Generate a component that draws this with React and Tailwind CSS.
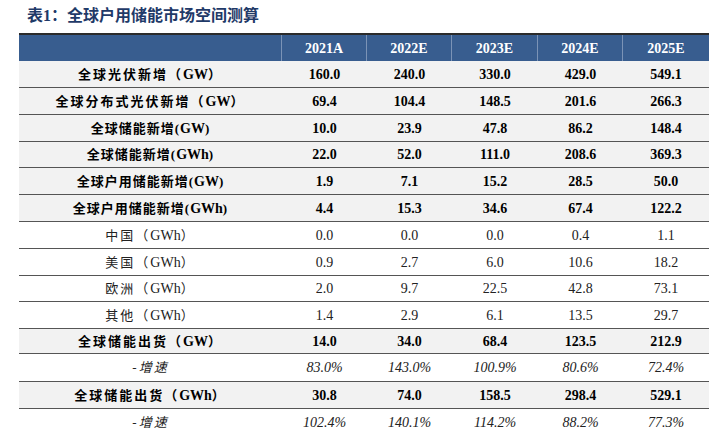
import React from "react";

const serif = { fontFamily: '"Liberation Serif", "Noto Sans CJK SC", serif' };

const years = ["2021A", "2022E", "2023E", "2024E", "2025E"];

const rows = [
  { label: "全球光伏新增（GW）", vals: ["160.0", "240.0", "330.0", "429.0", "549.1"], kind: "bold", h: 27 },
  { label: "全球分布式光伏新增（GW）", vals: ["69.4", "104.4", "148.5", "201.6", "266.3"], kind: "bold", h: 27 },
  { label: "全球储能新增(GW)", vals: ["10.0", "23.9", "47.8", "86.2", "148.4"], kind: "bold", h: 27, tight: true },
  { label: "全球储能新增(GWh)", vals: ["22.0", "52.0", "111.0", "208.6", "369.3"], kind: "bold", h: 26, tight: true },
  { label: "全球户用储能新增(GW)", vals: ["1.9", "7.1", "15.2", "28.5", "50.0"], kind: "bold", h: 27, tight: true },
  { label: "全球户用储能新增(GWh)", vals: ["4.4", "15.3", "34.6", "67.4", "122.2"], kind: "bold", h: 27, tight: true },
  { label: "中国（GWh）", vals: ["0.0", "0.0", "0.0", "0.4", "1.1"], kind: "plain", h: 27 },
  { label: "美国（GWh）", vals: ["0.9", "2.7", "6.0", "10.6", "18.2"], kind: "plain", h: 27 },
  { label: "欧洲（GWh）", vals: ["2.0", "9.7", "22.5", "42.8", "73.1"], kind: "plain", h: 26 },
  { label: "其他（GWh）", vals: ["1.4", "2.9", "6.1", "13.5", "29.7"], kind: "plain", h: 27 },
  { label: "全球储能出货（GW）", vals: ["14.0", "34.0", "68.4", "123.5", "212.9"], kind: "bold", h: 25 },
  { label: "-增速", vals: ["83.0%", "143.0%", "100.9%", "80.6%", "72.4%"], kind: "italic", h: 28 },
  { label: "全球储能出货（GWh）", vals: ["30.8", "74.0", "158.5", "298.4", "529.1"], kind: "bold", h: 27 },
  { label: "-增速", vals: ["102.4%", "140.1%", "114.2%", "88.2%", "77.3%"], kind: "italic", h: 27, last: true },
];

const colW = ["w-[85px]", "w-[85px]", "w-[86px]", "w-[85px]", "w-[86px]"];

// keep latin runs (GW, GWh) unspaced while CJK gets letter spacing
function Label({ text }) {
  const parts = text.split(/([A-Za-z]+)/);
  return parts.map((p, i) =>
    /^[A-Za-z]+$/.test(p) ? (
      <span key={i} className="tracking-normal text-[14px]">
        {p}
      </span>
    ) : (
      <span key={i}>{p}</span>
    )
  );
}

export default function App() {
  return (
    <div className="w-[727px] h-[442px] bg-white text-black overflow-hidden" style={serif}>
      {/* title */}
      <div className="h-[33px] pl-[27px] pt-[6px] text-[16px] font-bold text-[#1f3a68] leading-[20px]">
        表1：全球户用储能市场空间测算
      </div>

      <div className="ml-[19px] w-[690px]">
        {/* header */}
        <div className="flex h-[28px] bg-[#385d8f] border-t-2 border-[#2b2b2b] text-white font-bold text-[14px]">
          <div className="w-[263px] border-r border-[#7b93b6]" />
          {years.map((y, i) => (
            <div
              key={y}
              className={`${colW[i]} flex items-center justify-center ${i < 4 ? "border-r border-[#7b93b6]" : ""}`}
            >
              {y}
            </div>
          ))}
        </div>

        {/* body */}
        {rows.map((r, ri) => {
          const bg = r.kind === "bold" ? "bg-[#f2f2f2]" : "bg-white";
          const txt =
            r.kind === "bold" ? "font-bold" : r.kind === "italic" ? "italic text-[#222]" : "text-[#222]";
          return (
            <div
              key={ri}
              className={`flex items-center ${bg} ${r.last ? "" : "border-b border-[#555]"}`}
              style={{ height: r.h }}
            >
              <div
                className={`w-[263px] text-center text-[13px] ${r.kind === "bold" ? "font-bold" : "text-[#222]"} ${
                  r.kind === "italic" ? "italic" : ""
                } ${r.tight ? "tracking-[1px]" : "tracking-[2px]"}`}
              >
                <Label text={r.label} />
              </div>
              {r.vals.map((v, i) => (
                <div key={i} className={`${colW[i]} text-center text-[14px] ${txt}`}>
                  {v}
                </div>
              ))}
            </div>
          );
        })}
      </div>
    </div>
  );
}
